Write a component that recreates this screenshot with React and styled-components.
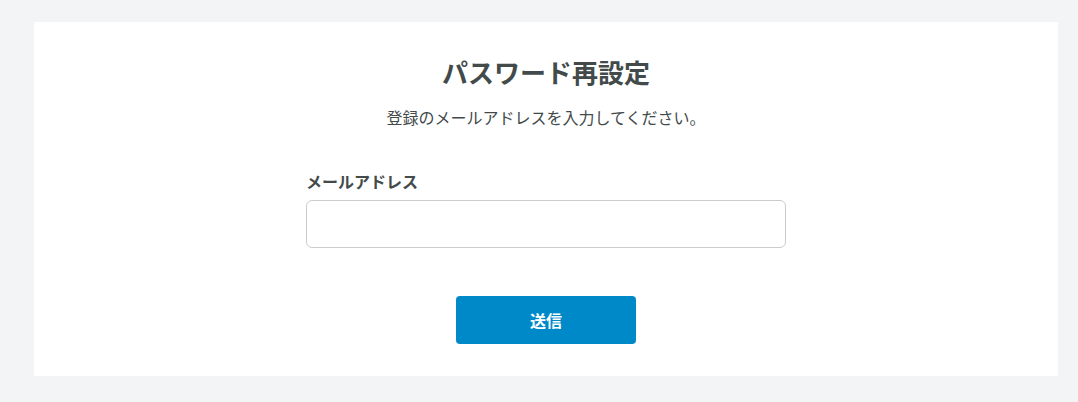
import React from "react";
import styled, { createGlobalStyle } from "styled-components";

const GlobalStyle = createGlobalStyle`
  html, body {
    margin: 0;
    padding: 0;
    background: #f3f4f6;
  }
  body {
    font-family: "Noto Sans CJK JP", "Noto Sans", sans-serif;
    color: #3f4545;
  }
`;

const Page = styled.div`
  padding: 22px 20px 26px 34px;
  width: 1078px;
  box-sizing: border-box;
`;

const Card = styled.div`
  background: #ffffff;
  height: 354px;
  box-sizing: border-box;
  padding-top: 32px;
  display: flex;
  flex-direction: column;
  align-items: center;
`;

const Title = styled.h1`
  margin: 0;
  font-size: 26px;
  line-height: 36px;
  font-weight: 700;
  color: #434a4a;
`;

const Lead = styled.p`
  margin: 15px 0 0;
  font-size: 16px;
  line-height: 24px;
  color: #434a4a;
`;

const Form = styled.form`
  width: 480px;
  margin-top: 40px;
  display: flex;
  flex-direction: column;
`;

const Label = styled.label`
  font-size: 16px;
  line-height: 24px;
  font-weight: 700;
  color: #434a4a;
  margin-bottom: 7px;
`;

const Input = styled.input`
  height: 48px;
  box-sizing: border-box;
  border: 1px solid #cccccc;
  border-radius: 6px;
  padding: 0 12px;
  font-size: 16px;
  font-family: inherit;
  outline: none;
`;

const Submit = styled.button`
  align-self: center;
  margin-top: 48px;
  width: 180px;
  height: 48px;
  border: none;
  border-radius: 4px;
  background: #0089c9;
  color: #ffffff;
  font-family: inherit;
  font-size: 16px;
  font-weight: 700;
  cursor: pointer;
`;

const App = () => {
  return (
    <>
      <GlobalStyle />
      <Page>
        <Card>
          <Title>パスワード再設定</Title>
          <Lead>登録のメールアドレスを入力してください。</Lead>
          <Form onSubmit={(e) => e.preventDefault()}>
            <Label htmlFor="email">メールアドレス</Label>
            <Input id="email" type="email" />
            <Submit type="submit">送信</Submit>
          </Form>
        </Card>
      </Page>
    </>
  );
};

export default App;
